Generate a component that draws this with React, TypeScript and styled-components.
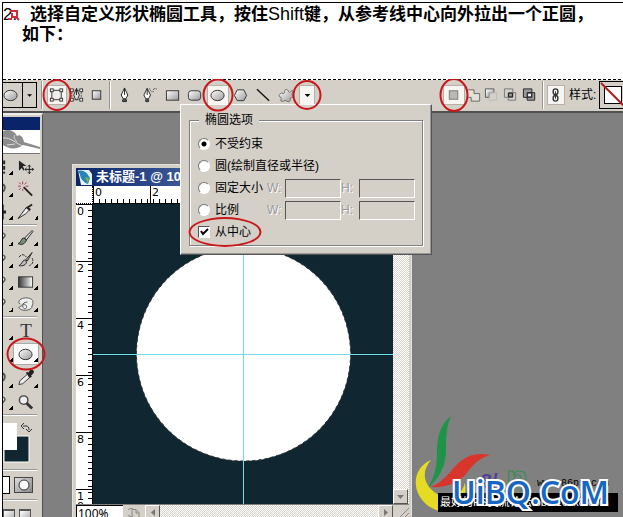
import React from 'react';
import styled, { createGlobalStyle } from 'styled-components';

const face = '#d4d0c8';
const navy = '#0a246a';
const canvas = '#102631';
const red = '#c8161a';
const ui = "'Liberation Sans', 'Noto Sans CJK SC', sans-serif";

const Global = createGlobalStyle`
  * { box-sizing: border-box; }
  body { margin: 0; background: #fff; color: #000; font-family: ${ui}; overflow: hidden; }
  button, input { font: inherit; color: inherit; padding: 0; margin: 0; border-radius: 0; }
  svg { display: block; flex: none; }
`;

const Article = styled.article`
  display: flex;
  flex-direction: column;
  height: calc(100vh - 2px);
  margin: 2px 0 0 2px;
  border: solid #000;
  border-width: 1px 0 0 1px;
`;

const Step = styled.p`
  margin: 0;
  height: 76px;
  flex: none;
  padding: 1px 0 0 19px;
  font: 700 17px/20px ${ui};
  white-space: nowrap;
`;
const StepNumber = styled.span`
  position: relative;
  display: inline-block;
  width: 27px;
  margin-left: -19px;
  font-weight: 400;
`;
const Marker = styled.span`
  position: absolute;
  left: 5px;
  top: 4px;
`;
const Light = styled.span`
  font-weight: 400;
  font-size: 18px;
`;

const Workspace = styled.main`
  position: relative;
  flex: 1;
  min-height: 0;
  overflow: hidden;
  display: flex;
  flex-direction: column;
  background: #808080;
`;

const OptionsBar = styled.header`
  display: flex;
  align-items: center;
  flex: none;
  height: 34px;
  padding-bottom: 1px;
  background: repeating-linear-gradient(90deg, #000 0 3px, #fff 3px 5px) top / 100% 1px no-repeat ${face};
  border-bottom: 2px solid #505050;
  font: 12px/16px ${ui};
  white-space: nowrap;
`;
const Preview = styled.button`
  display: flex;
  align-items: center;
  width: 34px;
  height: 26px;
  flex: none;
  border: 1px solid #000;
  border-left: 0;
  background: ${face};
`;
const PreviewArrow = styled.span`
  display: grid;
  place-items: center;
  width: 14px;
  height: 24px;
  margin-left: auto;
  border-left: 1px solid #000;
`;
const Separator = styled.i<{ $w: number }>`
  width: ${p => p.$w}px;
  height: 28px;
  flex: none;
  background: linear-gradient(90deg, #9a968e 50%, #fff 50%) center / 2px 100% no-repeat;
`;
const BarButton = styled.button<{ $w: number; $on?: boolean; $far?: boolean }>`
  position: relative;
  display: grid;
  place-items: center;
  flex: none;
  width: ${p => p.$w}px;
  height: 20px;
  margin-left: ${p => (p.$far ? 128 : 0)}px;
  border: 1px solid ${p => (p.$on ? '#b5b1a8' : 'transparent')};
  background: ${p => (p.$on ? '#f6f5f2' : 'transparent')};
`;
const Ring = styled.i<{ $w: number; $h: number }>`
  position: absolute;
  z-index: 3;
  left: 50%;
  top: 50%;
  width: ${p => p.$w}px;
  height: ${p => p.$h}px;
  transform: translate(-50%, -50%);
  border: 2px solid ${red};
  border-radius: 50%;
  pointer-events: none;
`;
const StyleLabel = styled.span`
  width: 34px;
  flex: none;
  padding-left: 4px;
`;
const Swatch = styled.button`
  flex: none;
  width: 40px;
  height: 28px;
  border: 1px solid #000;
  background: ${face};
`;

const Palette = styled.nav`
  width: 40px;
  flex: none;
  display: flex;
  flex-direction: column;
  background: ${face};
  border-top: 2px solid #eeece8;
  border-right: 1px solid #505050;
`;
const PaletteTitle = styled.div`
  height: 13px;
  margin: 2px 2px 0 0;
  flex: none;
  background: ${navy};
`;
const Feather = styled.div`
  height: 24px;
  margin: 0 2px 2px 0;
  flex: none;
  background: #fff;
  border-bottom: 1px solid #777;
`;
const ToolRow = styled.div<{ $h?: number }>`
  display: flex;
  flex: none;
  height: ${p => p.$h ?? 22}px;
`;
const HalfTool = styled.button`
  display: flex;
  justify-content: flex-end;
  align-items: center;
  width: 10px;
  padding-right: 6px;
  border: 0;
  overflow: hidden;
  background: linear-gradient(135deg, transparent 50%, #000 50%) right 0 bottom 3px / 4px 4px no-repeat;
`;
const Tool = styled.button<{ $on?: boolean; $plain?: boolean }>`
  position: relative;
  display: grid;
  place-items: center;
  width: 26px;
  border: 1px solid ${p => (p.$on ? '#aaa' : 'transparent')};
  background: ${p => (p.$plain ? 'none' : 'linear-gradient(135deg, transparent 50%, #000 50%) right 0 bottom 2px / 4px 4px no-repeat')};
  background-color: ${p => (p.$on ? '#fafafa' : 'transparent')};
`;
const Divider = styled.hr`
  width: 34px;
  height: 2px;
  flex: none;
  margin: 1px 0;
  border: 0;
  border-top: 1px solid #999;
  background: #fff;
`;
const Colors = styled.div`
  height: 51px;
  flex: none;
  padding-top: 5px;
`;
const Modes = styled.div`
  display: flex;
  gap: 4px;
  height: 26px;
  flex: none;
  align-items: center;
`;
const HalfMode = styled.button`
  width: 7px;
  height: 18px;
  border: 1px solid #000;
  border-left: 0;
  background: #fff;
`;
const Mode = styled.button`
  display: grid;
  place-items: center;
  width: 19px;
  height: 16px;
  border: 1px solid #444;
  background: linear-gradient(135deg, #ddd, #888);
`;
const Screen = styled.button`
  width: 12px;
  height: 12px;
  border: 1px solid #555;
  border-top-width: 2px;
  background: linear-gradient(135deg, #fff, #aaa);
`;

const DocWindow = styled.section`
  position: absolute;
  left: 69px;
  top: 85px;
  border: 4px solid ${face};
  border-right-width: 3px;
  outline: 1px solid #e6e3dd;
  outline-offset: -1px;
`;
const TitleBar = styled.h1`
  display: flex;
  align-items: center;
  gap: 3px;
  height: 18px;
  margin: 0;
  background: linear-gradient(90deg, ${navy}, #a6caf0);
  color: #fff;
  font: 700 13px/18px ${ui};
`;
const Sheet = styled.div`
  display: grid;
  grid-template-columns: 17px 300px 16px;
  grid-template-rows: 18px 300px 17px;
  font: 11px/14px 'DejaVu Sans', sans-serif;
`;
const Corner = styled.div`
  background: #fff;
  border: dotted #000;
  border-width: 0 1px 1px 0;
`;
const RulerX = styled.div`
  display: flex;
  border-bottom: 1px solid #000;
  background:
    repeating-linear-gradient(90deg, #000 0 1px, transparent 1px 57px) 0 0 / 100% 100%,
    linear-gradient(90deg, #000 1px, transparent 1px) 0 100% / 6px 4px repeat-x, #fff;
`;
const XLabel = styled.span`
  flex: 0 0 57px;
  padding-left: 2px;
  line-height: 13px;
`;
const RulerY = styled.div`
  display: flex;
  flex-direction: column;
  overflow: hidden;
  border-right: 1px solid #000;
  background:
    repeating-linear-gradient(180deg, #000 0 1px, transparent 1px 57px) 0 0 / 100% 100%,
    linear-gradient(180deg, #000 1px, transparent 1px) 100% 0 / 4px 6px repeat-y, #fff;
`;
const YLabel = styled.span`
  flex: 0 0 57px;
  width: 8px;
  line-height: 10px;
  padding: 3px 0 0 1px;
  word-break: break-all;
`;
const dither = 'repeating-conic-gradient(#fff 0 25%, #d8d4cc 0 50%) 0 0 / 2px 2px';
const ScrollY = styled.div`
  display: flex;
  align-items: flex-end;
  background: ${dither};
`;
const ScrollButton = styled.button`
  display: grid;
  place-items: center;
  width: 15px;
  height: 15px;
  flex: none;
  border: 1px solid;
  border-color: #fff #555 #555 #fff;
  background: ${face};
`;
const StatusBar = styled.footer`
  grid-column: 1 / -1;
  display: flex;
  border-top: 1px solid #808080;
  background: ${dither};
`;
const Zoom = styled.input`
  && { font: 12px/14px 'Noto Sans', sans-serif; }
  width: 47px;
  height: 16px;
  padding-left: 1px;
  border: 1px solid #000;
  border-right: 0;
  background: #fff;
`;
const StatusIcon = styled.span`
  display: grid;
  place-items: center;
  width: 22px;
  background: ${face};
`;
const Fill = styled.i`flex: 1;`;

const Popup = styled.form`
  position: absolute;
  z-index: 2;
  left: 177px;
  top: 25px;
  width: 252px;
  padding: 8px;
  border: 1px solid;
  border-color: #fff #555 #555 #fff;
  box-shadow: inset -1px -1px #999;
  background: ${face};
  font: 12px/16px ${ui};
`;
const Group = styled.fieldset`
  margin: 0;
  padding: 6px 0 2px 8px;
  border: 1px solid #808080;
  box-shadow: 1px 1px #fff, inset 1px 1px #fff;
`;
const Legend = styled.legend`
  margin-left: 1px;
  padding: 0 6px;
  background: ${face};
  line-height: 14px;
`;
const Row = styled.div`
  display: flex;
  align-items: center;
  height: 22px;
`;
const Choice = styled.label`
  position: relative;
  display: flex;
  align-items: center;
  gap: 5px;
  white-space: nowrap;
`;
const OptionSlot = styled.div`width: 69px;`;
const Radio = styled.input`
  appearance: none;
  width: 12px;
  height: 12px;
  border: 1px solid;
  border-color: #777 #fff #fff #777;
  border-radius: 50% !important;
  background: #fff;
  &:checked { background: radial-gradient(circle, #000 2px, #fff 3px); }
`;
const Check = styled.input`
  appearance: none;
  width: 12px;
  height: 12px;
  border: 1px solid;
  border-color: #555 #fff #fff #555;
  background: #fff;
`;
const Tick = styled.span`
  position: absolute;
  left: 2px;
  top: 4px;
  pointer-events: none;
`;
const Size = styled.label`
  display: flex;
  align-items: center;
  color: #999;
  text-shadow: 1px 1px #fff;
`;
const SizeName = styled.span`width: 18px;`;
const SizeInput = styled.input`
  width: 56px;
  height: 19px;
  border: 1px solid;
  border-color: #555 #fff #fff #555;
  background: ${face};
`;

const Watermark = styled.aside`
  position: absolute;
  right: 0;
  bottom: 0;
  width: 210px;
  height: 105px;
`;
const Over = styled.span<{ $x: number; $y: number }>`
  position: absolute;
  left: ${p => p.$x}px;
  top: ${p => p.$y}px;
  white-space: nowrap;
`;
const Number86 = styled(Over)`
  color: #51409a;
  font: 700 20px/20px 'Liberation Sans', sans-serif;
`;
const Initial = styled(Over)`
  color: transparent;
  -webkit-text-stroke: 1px #2d9150;
  font: 700 36px/42px 'Liberation Sans', sans-serif;
`;
const Site = styled(Over)`
  font: 10px/14px 'Liberation Mono', monospace;
`;
const Forum = styled(Over)`
  width: 180px;
  height: 19px;
  padding-left: 2px;
  background: #000;
  color: #fff;
  font: 11px/19px ${ui};
`;
const Brand = styled(Over)`
  color: #1767c2;
  font: 600 32px/36px 'Open Sans', sans-serif;
  -webkit-text-stroke: 4px #fff;
  paint-order: stroke fill;
`;

const Defs = () => (
  <svg width="0" height="0" aria-hidden="true">
    <defs>
      <linearGradient id="metal" x2="1" y2="1">
        <stop offset="0" stopColor="#fff" />
        <stop offset="1" stopColor="#999" />
      </linearGradient>
      <linearGradient id="fade"><stop stopColor="#333" /><stop offset="1" stopColor="#fff" /></linearGradient>
    </defs>
  </svg>
);

const shapes: Record<string, React.ReactNode> = {
  shape: <><rect x="3" y="3" width="10" height="10" fill="#eee" stroke="#333" />
    {[1, 11].map(x => [1, 11].map(y => <rect key={`${x}${y}`} x={x + .5} y={y + .5} width="3" height="3" fill="#fff" stroke="#333" />))}</>,
  path: <><rect x="3" y="3" width="10" height="10" fill="none" stroke="#555" strokeDasharray="2 1" />
    {[1, 11].map(x => [1, 11].map(y => <rect key={`${x}${y}`} x={x + .5} y={y + .5} width="3" height="3" fill="#fff" stroke="#333" />))}
    <path d="M8 1 5 8l2 5h2l2-5zM8 1v7" fill="#ddd" stroke="#222" /></>,
  pixels: <rect x="3.5" y="3.5" width="9" height="9" fill="url(#metal)" stroke="#333" />,
  pen: <><path d="M8 .5 4.500 8l2 4h3l2-4z" fill="#fff" stroke="#222" /><path d="M8 1v7M6 13h4v2H6z" fill="#666" stroke="#222" /></>,
  freepen: <><path d="M5.500 1 2 8l2 4h3l2-4z" fill="#fff" stroke="#222" /><path d="M5.500 1v7M4 13h3v2H4z" fill="#666" stroke="#222" /><path d="M8 1c2 5 4 5 4 2s3-2 4-1" fill="none" stroke="#333" strokeDasharray="1 1" /></>,
  rect: <rect x="1.500" y="3.500" width="13" height="10" fill="url(#metal)" stroke="#333" />,
  rrect: <rect x="1.500" y="3.500" width="13" height="10" rx="3" fill="url(#metal)" stroke="#333" />,
  ellipse: <ellipse cx="8" cy="8.500" rx="7" ry="5.500" fill="url(#metal)" stroke="#333" />,
  polygon: <path d="M4.500 2.500h7l3 6-3 5.500h-7l-3-5.500z" fill="url(#metal)" stroke="#333" />,
  line: <path d="m1 2 13 12" stroke="#111" strokeWidth="1.500" />,
  blob: <path d="M3 6c2 1 3 0 3-2s3-3 4 0 2 0 4-1c2 1-1 4 0 5s1 3-1 3 0 3-2 4-3-2-5-1-5 1-4-1 1-2-1-3 0-4 2-4z" fill="url(#metal)" stroke="#666" />,
  down: <path d="M5 7h6l-3 3z" />,
  fresh: <rect x="3.500" y="3.500" width="9" height="9" fill="#bbb9b2" stroke="#777" />,
  add: <path d="M1.500 2.500h7v4h6v8h-9v-4h-4z" fill="#e3e1dc" stroke="#666" />,
  subtract: <><path d="M1.500 1.500h9v4h-5v5h-4z" fill="url(#metal)" stroke="#555" /><path d="M5.500 5.500h8v8h-8z" fill="none" stroke="#bbb" /></>,
  intersect: <><path d="M1.500 1.500h9v9h-9zM5.500 5.500h8v8h-8z" fill="none" stroke="#777" /><path d="M6 6h4v4H6z" fill="#999" stroke="#111" /></>,
  exclude: <><path d="M1.500 1.500h9v9h-9zM5.500 5.500h8v8h-8z" fill="#999" stroke="#222" /><path d="M6 6h4v4H6z" fill="#fff" stroke="#222" /></>,
  link: <><rect x="5.500" y="1.500" width="5" height="6" rx="2.500" fill="none" stroke="#333" strokeWidth="1.500" /><rect x="5.500" y="8.500" width="5" height="6" rx="2.500" fill="none" stroke="#333" strokeWidth="1.500" /><path d="M8 4v8" stroke="#333" /></>,
  move: <><path d="M1 1v11l3-3 2 3 1-1-2-4h4z" fill="#222" /><path d="M12 6v9M7.500 10.500h9M10.500 7.500 12 6l1.500 1.500M10.500 13.500 12 15l1.500-1.500M9 9l-1.500 1.500L9 12M15 9l1.500 1.500L15 12" fill="none" stroke="#111" /></>,
  wand: <><path d="m6 6 9 9" stroke="#222" strokeWidth="2" /><path d="M5 0v3M0 5h3M1 1l2 2M9 1 7 3M1 9l2-2M5 8v2M8 5h3" stroke="#a35" /></>,
  slice: <><path d="m0 15 9-12 4 2-5 5z" fill="#eee" stroke="#222" /><path d="m9 4 6-4M9 3l4 3" stroke="#222" strokeWidth="2" /></>,
  brush: <><path d="M15 0 7 8l2 2 7-9z" fill="#ddd" stroke="#222" /><path d="M6 8c-3 0-2 5-6 6 4 2 8 0 9-4z" fill="#789179" stroke="#222" /></>,
  history: <><path d="M15 0 8 8l2 1zM7 8c-3 1-3 5-6 6 4 1 8-1 8-4z" fill="#bbb" stroke="#222" /><path d="M1 5c3-4 6-3 8 0M15 6c2 4 0 7-3 8" fill="none" stroke="#222" strokeDasharray="3 1" /></>,
  gradient: <rect x=".5" y="2.500" width="15" height="11" fill="url(#fade)" stroke="#333" />,
  sponge: <path d="M2 8C-2 4 6 0 12 2c5 1 4 5 3 8 0 5-10 6-13 3C-1 11 3 11 5 9s5 1 4 3-4 1-4-2 2-4 5-4" fill="#eee" stroke="#555" />,
  dropper: <><path d="m1 15 1-4 8-7 3 3-8 7z" fill="#eee" stroke="#333" /><path d="m9 2 5 5M11 4l2-3c2-2 4 0 2 2l-3 3z" fill="#222" stroke="#222" strokeWidth="2" /></>,
  zoom: <><circle cx="6" cy="6" r="4.500" fill="#eee" stroke="#444" strokeWidth="1.500" /><path d="m9 9 6 6" stroke="#333" strokeWidth="3" /></>,
  marquee: <path d="M1 2h13v12H1z" fill="none" stroke="#222" strokeWidth="2" strokeDasharray="4 2" />,
  lasso: <path d="M2 3h10c4 1 3 7 0 8H2" fill="none" stroke="#555" strokeWidth="2" />,
  crop: <path d="M12 0v16M4 8h12" stroke="#222" strokeWidth="3" />,
  heal: <path d="M3 13 11 3c3-1 5 2 3 4l-7 8z" fill="#ddd" stroke="#555" strokeWidth="1.500" />,
};
const Icon = ({ name, size = 16 }: { name: string; size?: number }) => (
  <svg width={size} height={size} viewBox="0 0 17 16" overflow="visible" aria-hidden="true">{shapes[name]}</svg>
);
const TypeGlyph = styled.span`
  color: #333;
  font: 19px/20px 'Liberation Serif', serif;
`;

type Item = { name: string; label: string; w: number; on?: boolean; far?: boolean; ring?: [number, number] };
const modes: Item[] = [
  { name: 'shape', label: '形状图层', w: 20, on: true, ring: [29, 32] },
  { name: 'path', label: '路径', w: 20 },
  { name: 'pixels', label: '填充像素', w: 20 },
];
const drawing: Item[] = [
  { name: 'pen', label: '钢笔', w: 24 },
  { name: 'freepen', label: '自由钢笔', w: 26 },
  { name: 'rect', label: '矩形', w: 20 },
  { name: 'rrect', label: '圆角矩形', w: 24 },
  { name: 'ellipse', label: '椭圆', w: 22, on: true, ring: [31, 33] },
  { name: 'polygon', label: '多边形', w: 24 },
  { name: 'line', label: '直线', w: 22 },
  { name: 'blob', label: '自定形状', w: 24 },
  { name: 'down', label: '几何选项', w: 16, on: true, ring: [29, 30] },
  { name: 'fresh', label: '新建', w: 22, on: true, far: true, ring: [29, 34] },
  { name: 'add', label: '添加', w: 18 },
  { name: 'subtract', label: '减去', w: 18 },
  { name: 'intersect', label: '交叉', w: 20 },
  { name: 'exclude', label: '重叠除外', w: 18 },
];
const BarItems = ({ items }: { items: Item[] }) => (
  <>{items.map(i => (
    <BarButton key={i.name} type="button" aria-label={i.label} $w={i.w} $on={i.on} $far={i.far}>
      <Icon name={i.name} />
      {i.ring && <Ring $w={i.ring[0]} $h={i.ring[1]} />}
    </BarButton>
  ))}</>
);

const plainTools = ['move', 'wand', 'zoom', 'type'];
const ToolPair = ({ left, right, on, h }: { left: string; right: string; on?: boolean; h?: number }) => (
  <ToolRow $h={h}>
    <HalfTool type="button" aria-label={left || 'selection'}><Icon name={left} /></HalfTool>
    <Tool type="button" aria-label={right} $on={on} $plain={plainTools.includes(right)}>
      {right === 'type' ? <TypeGlyph>T</TypeGlyph> : <Icon name={right} />}
      {on && <Ring $w={39} $h={33} />}
    </Tool>
  </ToolRow>
);

const SizeFields = ({ id }: { id: string }) => (
  <>{['W', 'H'].map(n => (
    <Size key={n} htmlFor={id + n}><SizeName>{n}:</SizeName><SizeInput id={id + n} disabled /></Size>
  ))}</>
);

export default function App() {
  return (
    <>
      <Global />
      <Article>
        <Step>
          <StepNumber>2.
            <Marker><svg width="12" height="12" viewBox="0 0 12 12"><path d="M2 2h7v6H4V4M8 8l3 3M0 10h4" fill="none" stroke="#d22b3b" strokeWidth="2" /></svg></Marker>
          </StepNumber>
          选择自定义形状椭圆工具，按住<Light>Shift</Light>键，从参考线中心向外拉出一个正圆，<br />如下：
        </Step>
        <Workspace>
          <OptionsBar>
            <Preview type="button" aria-label="工具预设">
              <Icon name="ellipse" />
              <PreviewArrow><Icon name="down" size={14} /></PreviewArrow>
            </Preview>
            <Separator $w={10} />
            <BarItems items={modes} />
            <Separator $w={6} />
            <BarItems items={drawing} />
            <Separator $w={8} />
            <BarButton type="button" aria-label="链接" $w={18} $on><Icon name="link" /></BarButton>
            <StyleLabel>样式:</StyleLabel>
            <Swatch type="button" aria-label="样式">
              <svg width="34" height="26" viewBox="0 0 34 26"><rect x="4.500" y="4.500" width="17" height="17" fill="#fff" stroke="#000" /><path d="m1 1 23 23" stroke="#b02020" strokeWidth="2" /></svg>
            </Swatch>
          </OptionsBar>

          <Palette>
            <PaletteTitle />
            <Feather>
              <svg width="38" height="23" viewBox="0 0 38 23">
                <path d="M0 1c5-2 11-1 14 5 3-2 6 1 7 6l16 5v2l-17-4c-5 4-13 5-20 0z" fill="#8c8c8c" />
                <path d="M0 8c8-1 13 6 20 8M12 5c-2 2 0 5 2 7M4 15l8-1" fill="none" stroke="#ddd" />
              </svg>
            </Feather>
            <ToolPair left="marquee" right="move" />
            <ToolPair left="lasso" right="wand" />
            <ToolPair left="crop" right="slice" h={23} />
            <Divider />
            <ToolPair left="heal" right="brush" />
            <ToolPair left="heal" right="history" />
            <ToolPair left="heal" right="gradient" />
            <ToolPair left="heal" right="sponge" />
            <Divider />
            <ToolPair left="" right="type" h={24} />
            <ToolPair left="" right="ellipse" on />
            <ToolPair left="lasso" right="dropper" h={26} />
            <ToolPair left="heal" right="zoom" />
            <Divider />
            <Colors>
              <svg width="36" height="44" viewBox="0 0 36 44">
                <path d="M1 14h25v26H1z" fill={canvas} stroke="#fff" /><path d="M-1 1h15v27H-1z" fill="#fff" />
                <path d="M20 4h3c2 0 3 1 3 4M21 1l-3 3 3 3M23 7l3 3 3-3" fill="none" stroke="#333" />
              </svg>
            </Colors>
            <Divider />
            <Modes>
              <HalfMode type="button" aria-label="标准模式" />
              <Mode type="button" aria-label="快速蒙版"><svg width="12" height="12"><circle cx="6" cy="6" r="5" fill="#fff" stroke="#333" /></svg></Mode>
            </Modes>
            <Divider />
            <Modes>
              <Screen type="button" aria-label="标准屏幕" />
              <Screen type="button" aria-label="全屏" />
            </Modes>
          </Palette>

          <DocWindow>
            <TitleBar>
              <svg width="17" height="17" viewBox="0 0 17 17"><path d="M2 1h11l3 4v11H5z" fill="#e8f2fa" /><path d="M1 2c6-2 10 1 13 7l-2 6C7 13 4 9 4 5z" fill="#2783b8" /><path d="m9 8 4 1-1 6z" fill="#76b747" /></svg>
              未标题-1 @ 100%
            </TitleBar>
            <Sheet>
              <Corner />
              <RulerX>{[0, 2, 4, 6, 8].map(n => <XLabel key={n}>{n}</XLabel>)}</RulerX>
              <ScrollY />
              <RulerY>{[0, 2, 4, 6, 8, 10].map(n => <YLabel key={n}>{n}</YLabel>)}</RulerY>
              <svg width="300" height="300" viewBox="0 0 300 300" role="img" aria-label="画布">
                <path fill={canvas} d="M0 0h300v300H0z" />
                <circle cx="150.500" cy="150" r="107" fill="#fff" />
                <circle cx="150.500" cy="150" r="107" fill="none" stroke="#333" strokeDasharray="3 3" />
                <path d="M150.500 0v300M0 150.500h300" stroke="#6fdde6" />
              </svg>
              <ScrollY><ScrollButton type="button" aria-label="向下"><svg width="7" height="4"><path d="M0 0h7L3.500 4z" fill="#777" /></svg></ScrollButton></ScrollY>
              <StatusBar>
                <Zoom aria-label="缩放" defaultValue="100%" />
                <StatusIcon><svg width="13" height="13" viewBox="0 0 13 13"><path d="M4 2.500h4l3 3v5H4zM8 3v3h3M5 9a4 4 0 1 1 0-7" fill="none" stroke="#888" /></svg></StatusIcon>
                <ScrollButton type="button" aria-label="向左"><svg width="4" height="7"><path d="M4 0v7L0 3.500z" fill="#777" /></svg></ScrollButton>
                <Fill />
                <ScrollButton type="button" aria-label="向右"><svg width="4" height="7"><path d="M0 0v7l4-3.500z" fill="#777" /></svg></ScrollButton>
                <svg width="16" height="16"><path fill={face} d="M0 0h16v16H0z" /><path d="M3 16 16 3M8 16l8-8M13 16l3-3" stroke="#888" /></svg>
              </StatusBar>
            </Sheet>
          </DocWindow>

          <Popup>
            <Group>
              <Legend>椭圆选项</Legend>
              <Row><Choice><Radio type="radio" name="mode" defaultChecked />不受约束</Choice></Row>
              <Row><Choice><Radio type="radio" name="mode" />圆(绘制直径或半径)</Choice></Row>
              <Row>
                <OptionSlot><Choice><Radio type="radio" name="mode" />固定大小</Choice></OptionSlot>
                <SizeFields id="fixed" />
              </Row>
              <Row>
                <OptionSlot><Choice><Radio type="radio" name="mode" />比例</Choice></OptionSlot>
                <SizeFields id="ratio" />
              </Row>
              <Row>
                <Choice>
                  <Check type="checkbox" defaultChecked />
                  <Tick><svg width="9" height="8"><path d="m1 3 2 3 5-5" fill="none" stroke="#000" strokeWidth="2" /></svg></Tick>
                  从中心
                  <Ring $w={73} $h={30} />
                </Choice>
              </Row>
            </Group>
          </Popup>

          <Watermark>
            <svg width="210" height="105" viewBox="413 412 210 105" aria-hidden="true">
              <path d="M451 416c-10 8-14 19-14 36 0 17-3 26-10 37 12-11 18-21 19-37 0-15 0-24 5-36z" fill="#1f9448" />
              <path d="M490 455c-19-4-29 4-38 15-7 8-13 14-22 17 16 1 28-4 36-13 8-11 14-16 24-19z" fill="#d8352d" />
              <path d="M431 460c-17 7-20 27-8 41 10 11 22 12 30 9 10-5 14-15 12-27-4 12-11 18-22 14-18-8-24-23-12-37z" fill="#e5db25" />
            </svg>
            <Number86 $x={68} $y={59}>8/</Number86>
            <Initial $x={93} $y={46}>n</Initial>
            <Site $x={124} $y={65}>www.86ps.com</Site>
            <Forum $x={25} $y={81}>最好的PS交流论坛:bbs.16xx8.com</Forum>
            <Brand $x={39} $y={62}>UiBQ.CoM</Brand>
          </Watermark>
        </Workspace>
        <Defs />
      </Article>
    </>
  );
}
